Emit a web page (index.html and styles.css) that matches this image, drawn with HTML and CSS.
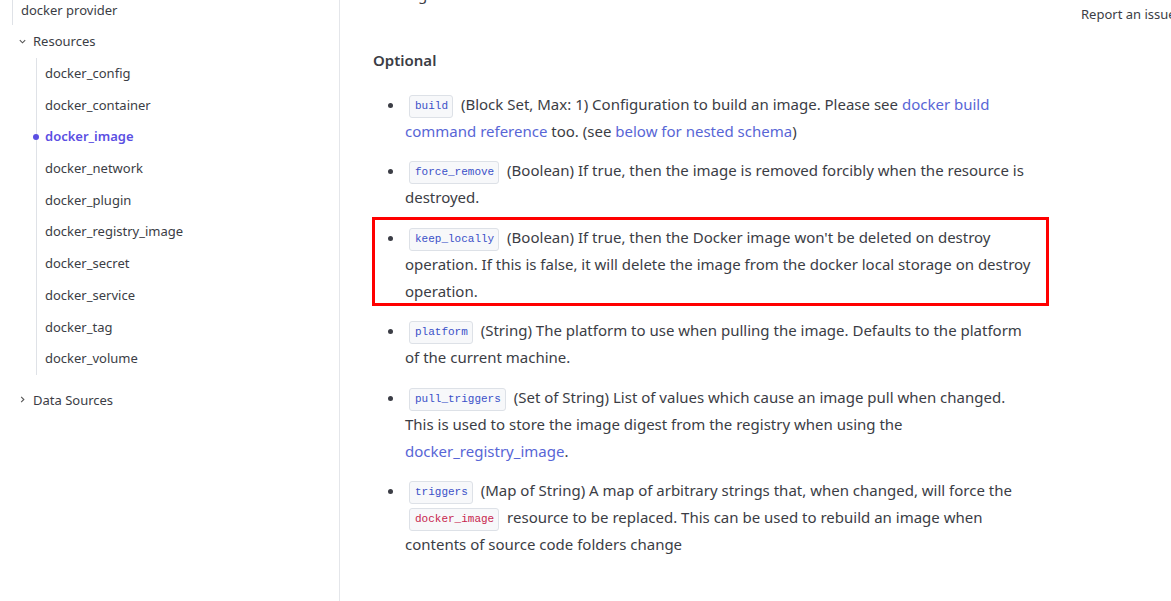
FILE: index.html
```html
<!DOCTYPE html>
<html>
<head>
<meta charset="utf-8">
<link rel="stylesheet" href="styles.css">
</head>
<body>
<div class="page">
  <aside class="sidebar">
    <div class="provider">docker provider</div>
    <div class="group">
      <div class="group-head"><span class="chev">
        <svg width="9" height="9" viewBox="0 0 10 10"><path d="M2 3.5 L5 6.5 L8 3.5" fill="none" stroke="#555" stroke-width="1.2"/></svg>
      </span>Resources</div>
      <ul class="children">
        <li>docker_config</li>
        <li>docker_container</li>
        <li class="active">docker_image</li>
        <li>docker_network</li>
        <li>docker_plugin</li>
        <li>docker_registry_image</li>
        <li>docker_secret</li>
        <li>docker_service</li>
        <li>docker_tag</li>
        <li>docker_volume</li>
      </ul>
    </div>
    <div class="group-head closed"><span class="chev">
      <svg width="9" height="9" viewBox="0 0 10 10"><path d="M3.5 2 L6.5 5 L3.5 8" fill="none" stroke="#555" stroke-width="1.2"/></svg>
    </span>Data Sources</div>
  </aside>
  <main class="content">
    <ul class="list prev">
      <li>digests.</li>
    </ul>
    <h3>Optional</h3>
    <ul class="list">
      <li><code>build</code> (Block Set, Max: 1) Configuration to build an image. Please see <a href="#">docker build command reference</a> too. (see <a href="#">below for nested schema</a>)</li>
      <li><code>force_remove</code> (Boolean) If true, then the image is removed forcibly when the resource is destroyed.</li>
      <li class="marked"><code>keep_locally</code> (Boolean) If true, then the Docker image won't be deleted on destroy operation. If this is false, it will delete the image from the docker local storage on destroy operation.<span class="highlight"></span></li>
      <li><code>platform</code> (String) The platform to use when pulling the image. Defaults to the platform of the current machine.</li>
      <li><code>pull_triggers</code> (Set of String) List of values which cause an image pull when changed. This is used to store the image digest from the registry when using the <a href="#">docker_registry_image</a>.</li>
      <li><code>triggers</code> (Map of String) A map of arbitrary strings that, when changed, will force the <code class="res">docker_image</code> resource to be replaced. This can be used to rebuild an image when contents of source code folders change</li>
    </ul>
  </main>
  <div class="right">Report an issue</div>
</div>
</body>
</html>
```

FILE: styles.css
```css
html, body {
  margin: 0;
  padding: 0;
  background: #fff;
  overflow: hidden;
}
body {
  font-family: "Noto Sans", "Open Sans", sans-serif;
  color: #3b3d45;
}
.page {
  display: flex;
  height: 601px;
  width: 1171px;
  overflow: hidden;
}
.sidebar {
  width: 339px;
  flex: none;
  border-right: 1px solid #e4e6ea;
  font-size: 13px;
  color: #3b3d45;
}
.provider {
  margin-left: 12px;
  border-left: 1px solid #dfe2e7;
  padding-left: 8px;
  height: 25px;
  line-height: 20px;
}
.group-head {
  display: flex;
  align-items: center;
  height: 22px;
  line-height: 22px;
  margin-top: 5px;
  padding-left: 18px;
}
.chev {
  width: 15px;
  display: inline-flex;
  align-items: center;
}
.group-head.closed {
  margin-top: 14px;
}
.children {
  list-style: none;
  margin: 6px 0 0 36px;
  padding: 0;
  border-left: 1px solid #dfe2e7;
}
.children li {
  height: 31.7px;
  line-height: 31.7px;
  padding-left: 8px;
  position: relative;
}
.children li.active {
  color: #5b4fe3;
  font-weight: 600;
}
.children li.active::before {
  content: "";
  position: absolute;
  left: -4px;
  top: 13px;
  width: 6px;
  height: 6px;
  border-radius: 50%;
  background: #5b4fe3;
}
.content {
  width: 663px;
  flex: none;
  padding-left: 33px;
  font-size: 15px;
  line-height: 27px;
}
.list {
  margin: 0;
  padding-left: 32px;
}
.list li {
  margin-bottom: 12.4px;
}
.prev {
  margin-top: -19px;
}
.prev li {
  margin-bottom: 0;
}
h3 {
  font-size: 15px;
  font-weight: 600;
  line-height: 24px;
  margin: 40px 0 19px;
  color: #3b3d45;
}
a {
  color: #5866d6;
  text-decoration: none;
}
code {
  font-family: "Liberation Mono", "DejaVu Sans Mono", monospace;
  font-size: 11px;
  line-height: 13px;
  color: #3a50c8;
  background: #f7f8fa;
  border: 1px solid #dde1e7;
  border-radius: 3px;
  padding: 4px 4px 4px 5px;
  margin: 0 4px 0 4px;
  display: inline-block;
  vertical-align: 1px;
}
code.res {
  color: #c7254e;
}
.marked {
  position: relative;
}
.highlight {
  position: absolute;
  top: -7px;
  left: -33px;
  right: -13px;
  bottom: -1px;
  border: 3px solid #ff0000;
  pointer-events: none;
}
.right {
  flex: 1;
  padding-left: 45px;
  padding-top: 5px;
  font-size: 13px;
  line-height: 18px;
  white-space: nowrap;
  color: #3b3d45;
}
```
